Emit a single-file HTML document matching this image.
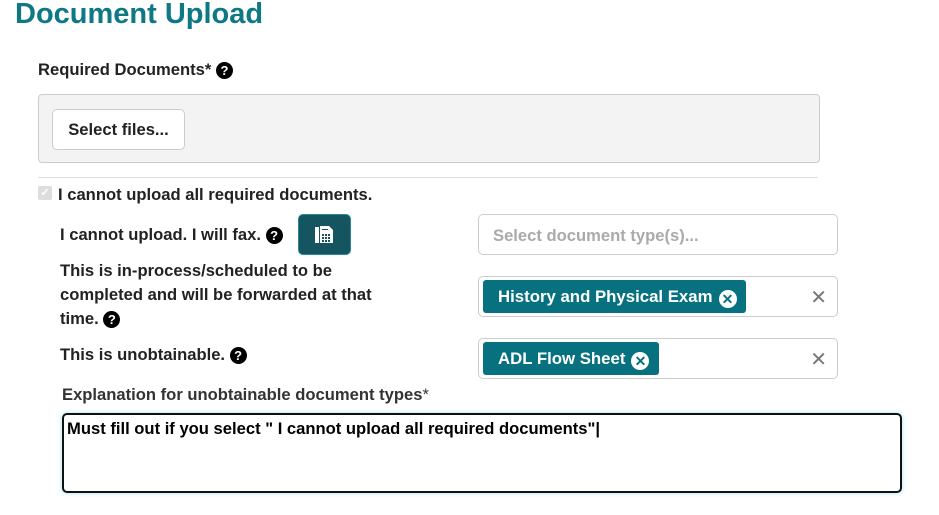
<!DOCTYPE html>
<html><head><style>
*{box-sizing:border-box;margin:0;padding:0}
body{width:939px;height:515px;background:#fff;font-family:"Liberation Sans",Arial,sans-serif;color:#222;position:relative;overflow:hidden;font-weight:bold}
.a{position:absolute}
h1{position:absolute;left:15px;top:-2px;font-size:29px;color:#0f7885;font-weight:bold}
.q{display:inline-block;width:17px;height:17px;border-radius:50%;background:#000;color:#fff;font-size:13px;line-height:17px;text-align:center;vertical-align:0px}
.lab{font-size:16.6px;color:#222}
.sel{position:absolute;left:478px;width:360px;height:41px;border:1px solid #ccc;border-radius:5px}
.tag{position:absolute;left:4px;top:3px;height:33px;background:#07717f;color:#fff;border-radius:3px;font-size:16.8px;line-height:33px;padding:0 0 0 15px}
.tx{display:inline-block;width:18px;height:18px;border-radius:50%;background:#fff;color:#07717f;font-size:14px;line-height:18px;text-align:center;margin-left:6px;vertical-align:-2px}
.cl{position:absolute;right:10px;top:8px;color:#777;font-size:20px;font-weight:normal}
</style></head><body>
<h1>Document Upload</h1>
<div class="a lab" style="left:38px;top:60px">Required Documents* <span class="q">?</span></div>
<div class="a" style="left:38px;top:94px;width:782px;height:69px;background:#f3f3f3;border:1px solid #ccc;border-radius:4px"></div>
<div class="a" style="left:52px;top:109px;width:133px;height:41px;background:#fff;border:1px solid #ccc;border-radius:5px;font-size:16.6px;line-height:39px;text-align:center">Select files...</div>
<div class="a" style="left:38px;top:177px;width:780px;height:1px;background:#ddd"></div>
<div class="a" style="left:38px;top:186px;width:14px;height:14px;background:#ddd;border-radius:2px;color:#fff;font-size:11px;line-height:14px;text-align:center">✓</div>
<div class="a lab" style="left:58px;top:185px">I cannot upload all required documents.</div>
<div class="a lab" style="left:60px;top:225px">I cannot upload. I will fax. <span class="q">?</span></div>
<div class="a" style="left:298px;top:214px;width:53px;height:41px;background:#14555f;border:1px solid #2a8a98;border-radius:5px">
<svg width="53" height="41" style="position:absolute;left:-1px;top:-1px"><rect x="17" y="13" width="4" height="16" fill="#fff"/><path d="M22 12h9l4 4v13H22z" fill="#fff"/><g fill="#14555f"><rect x="24" y="20" width="2" height="2"/><rect x="27" y="20" width="2" height="2"/><rect x="30" y="20" width="2" height="2"/><rect x="24" y="23" width="2" height="2"/><rect x="27" y="23" width="2" height="2"/><rect x="30" y="23" width="2" height="2"/><rect x="24" y="26" width="2" height="2"/><rect x="27" y="26" width="2" height="2"/><rect x="30" y="26" width="2" height="2"/><rect x="24" y="15" width="6" height="1"/></g></svg></div>
<div class="a lab" style="left:60px;top:259px;line-height:24px;width:330px">This is in-process/scheduled to be completed and will be forwarded at that time. <span class="q">?</span></div>
<div class="a lab" style="left:60px;top:345px">This is unobtainable. <span class="q">?</span></div>
<div class="sel" style="top:214px"><span class="a" style="left:14px;top:11px;color:#aaa;font-size:16.6px">Select document type(s)...</span></div>
<div class="sel" style="top:276px"><div class="tag">History and Physical Exam<span class="tx">✕</span>&nbsp;&nbsp;</div><span class="cl">✕</span></div>
<div class="sel" style="top:338px"><div class="tag">ADL Flow Sheet<span class="tx">✕</span>&nbsp;&nbsp;</div><span class="cl">✕</span></div>
<div class="a lab" style="left:62px;top:385px;font-weight:normal;color:#333;font-size:16.6px"><b>Explanation for unobtainable document types</b>*</div>
<div class="a" style="left:62px;top:413px;width:840px;height:80px;border:2px solid #111;border-radius:5px;box-shadow:0 0 5px #9de3f5;font-size:16.6px;padding:4px 3px;color:#000">Must fill out if you select " I cannot upload all required documents"|</div>
</body></html>
